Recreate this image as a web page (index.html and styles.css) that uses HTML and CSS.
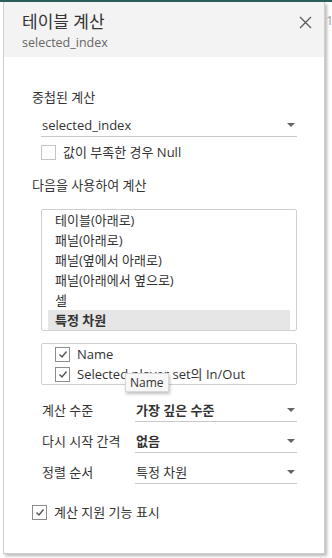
FILE: index.html
```html
<!DOCTYPE html>
<html lang="ko">
<head>
    <meta charset="UTF-8">
    <title>테이블 계산</title>
    <link rel="stylesheet" href="styles.css">
</head>
<body>
    <div class="topbar"></div>
    <span class="behind">1</span>

    <div class="panel">
        <div class="panel-header">
            <div>
                <div class="panel-title">테이블 계산</div>
                <div class="panel-subtitle">selected_index</div>
            </div>
            <svg class="close" width="13" height="13" viewBox="0 0 13 13">
                <path d="M1 1 L12 12 M12 1 L1 12" stroke="#5a5a5a" stroke-width="1.3" fill="none"/>
            </svg>
        </div>

        <div class="panel-body">
            <div class="label">중첩된 계산</div>
            <div class="select nested">
                <span>selected_index</span>
                <span class="caret"></span>
            </div>
            <label class="check-row null-row">
                <span class="box"></span>
                <span>값이 부족한 경우 Null</span>
            </label>

            <div class="label using">다음을 사용하여 계산</div>
            <ul class="list">
                <li>테이블(아래로)</li>
                <li>패널(아래로)</li>
                <li>패널(옆에서 아래로)</li>
                <li>패널(아래에서 옆으로)</li>
                <li>셀</li>
                <li class="selected">특정 차원</li>
            </ul>

            <div class="dims">
                <label class="check-row">
                    <span class="box checked">
                        <svg width="10" height="9" viewBox="0 0 10 9"><path d="M1.5 4.5 L4 7 L8.5 1.5" stroke="#555" stroke-width="1.4" fill="none"/></svg>
                    </span>
                    <span>Name</span>
                </label>
                <label class="check-row">
                    <span class="box checked">
                        <svg width="10" height="9" viewBox="0 0 10 9"><path d="M1.5 4.5 L4 7 L8.5 1.5" stroke="#555" stroke-width="1.4" fill="none"/></svg>
                    </span>
                    <span>Selected player set의 In/Out</span>
                </label>
                <div class="tooltip">Name</div>
            </div>

            <div class="field-rows">
                <div class="field-row">
                    <span class="field-label">계산 수준</span>
                    <div class="select strong">
                        <span>가장 깊은 수준</span>
                        <span class="caret"></span>
                    </div>
                </div>
                <div class="field-row">
                    <span class="field-label">다시 시작 간격</span>
                    <div class="select strong">
                        <span>없음</span>
                        <span class="caret"></span>
                    </div>
                </div>
                <div class="field-row">
                    <span class="field-label">정렬 순서</span>
                    <div class="select">
                        <span>특정 차원</span>
                        <span class="caret"></span>
                    </div>
                </div>
            </div>

            <label class="check-row assist">
                <span class="box checked">
                    <svg width="10" height="9" viewBox="0 0 10 9"><path d="M1.5 4.5 L4 7 L8.5 1.5" stroke="#555" stroke-width="1.4" fill="none"/></svg>
                </span>
                <span>계산 지원 기능 표시</span>
            </label>
        </div>
    </div>
</body>
</html>
```

FILE: styles.css
```css
* {
    margin: 0;
    padding: 0;
    box-sizing: border-box;
}

body {
    font-family: 'Open Sans', 'Noto Sans CJK KR', sans-serif;
    font-size: 13px;
    color: #333;
    background: #fff;
    width: 332px;
    height: 558px;
    overflow: hidden;
    position: relative;
}

.topbar {
    height: 2px;
    background: #2b5e5b;
}

.behind {
    position: absolute;
    left: 326px;
    top: 11px;
    font-size: 13px;
    color: #9aa3b0;
}

.panel {
    position: relative;
    width: 322px;
    height: 552px;
    margin-left: 3px;
    background: #fff;
    border: 1px solid #d0d0d0;
    border-top: none;
    box-shadow: 2px 2px 3px rgba(0, 0, 0, 0.28);
}

.panel-header {
    height: 55px;
    background: #f3f3f3;
    padding: 9px 12px 0 18px;
    display: flex;
    justify-content: space-between;
    align-items: flex-start;
}

.panel-title {
    font-size: 17px;
    line-height: 22px;
    color: #333;
}

.panel-subtitle {
    font-size: 12.5px;
    line-height: 16px;
    margin-top: 2px;
    color: #666;
}

.close {
    margin-top: 5px;
}

.panel-body {
    padding: 30px 27px 0 28px;
}

.label {
    line-height: 20px;
}

.label.using {
    margin-top: 13px;
}

.select {
    display: flex;
    justify-content: space-between;
    align-items: center;
    line-height: 20px;
    padding: 0 0 1px 1px;
    border-bottom: 1px solid #c8c8c8;
}

.select.nested {
    margin: 8px 0 0 9px;
}

.select.strong {
    font-weight: 700;
}

.caret {
    width: 0;
    height: 0;
    margin-right: 2px;
    border-left: 4px solid transparent;
    border-right: 4px solid transparent;
    border-top: 4px solid #666;
}

.check-row {
    display: flex;
    align-items: center;
    gap: 7px;
    line-height: 20px;
}

.null-row {
    margin: 5px 0 0 9px;
}

.box {
    width: 15px;
    height: 15px;
    border: 1px solid #c4c4c4;
    background: #fff;
    display: flex;
    align-items: center;
    justify-content: center;
}

.box.checked {
    border-color: #8c8c8c;
}

.list {
    list-style: none;
    margin: 14px 0 0 9px;
    padding: 0 6px;
    border: 1px solid #cfcfcf;
    border-radius: 2px;
}

.list li {
    line-height: 20px;
    padding-left: 7px;
}

.list li.selected {
    background: #e6e6e6;
    font-weight: 700;
}

.dims {
    position: relative;
    margin: 12px 0 0 9px;
    padding: 0 13px;
    border: 1px solid #cfcfcf;
    border-radius: 2px;
}

.tooltip {
    position: absolute;
    left: 83px;
    top: 29px;
    padding: 0 4px;
    line-height: 17px;
    font-size: 12px;
    background: #f7f7f7;
    border: 1px solid #d8d8d8;
    box-shadow: 1px 2px 3px rgba(0, 0, 0, 0.25);
}

.field-rows {
    margin: 15px 0 0 10px;
    display: flex;
    flex-direction: column;
    gap: 9px;
}

.field-row {
    display: flex;
    align-items: flex-start;
}

.field-label {
    width: 93px;
    line-height: 20px;
}

.field-row .select {
    flex: 1;
}

.assist {
    margin-top: 18px;
}
```
